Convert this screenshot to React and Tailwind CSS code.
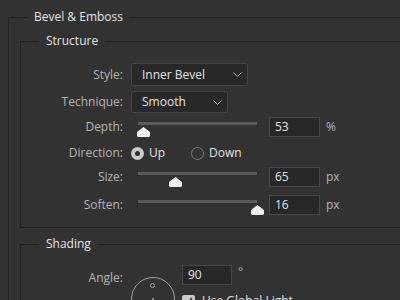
import React from "react";

const Label = ({ children, className = "" }) => (
  <div className={`w-[102px] shrink-0 pr-0 text-right text-[#b4b4b4] ${className}`}>{children}</div>
);

const Chevron = () => (
  <svg width="9" height="5" viewBox="0 0 9 5" className="shrink-0">
    <path d="M0.5 0.5 L4.5 4.5 L8.5 0.5" fill="none" stroke="#a8a8a8" strokeWidth="1" />
  </svg>
);

const Select = ({ value, width }) => (
  <div
    className={`ml-[8px] flex h-full items-center justify-between rounded-[3px] border border-[#454545] bg-[#282828] pl-[10px] pr-[5px] text-[#e2e2e2] ${width}`}
  >
    <span>{value}</span>
    <Chevron />
  </div>
);

const Thumb = () => (
  <svg width="13" height="10" viewBox="0 0 13 10">
    <path d="M6.5 0 L13 5 L13 8.5 Q13 10 11.5 10 L1.5 10 Q0 10 0 8.5 L0 5 Z" fill="#efefef" />
  </svg>
);

const Slider = ({ pos }) => (
  <div className="relative ml-[8px] h-full w-[138px] shrink-0">
    <div className="absolute left-[7px] top-[5px] h-[3px] w-[119px] bg-[#5b5b5b]" />
    <div className="absolute top-[10px]" style={{ left: pos - 6.5 }}>
      <Thumb />
    </div>
  </div>
);

const NumberBox = ({ value, width = "w-[51px]" }) => (
  <div className={`flex h-[20px] items-center border border-[#484848] bg-[#272727] pl-[5px] text-[#e2e2e2] ${width}`}>
    {value}
  </div>
);

const SliderRow = ({ label, pos, value, unit, className }) => (
  <div className={`flex h-[20px] items-center ${className}`}>
    <Label>{label}</Label>
    <Slider pos={pos} />
    <NumberBox value={value} />
    <span className="ml-[6px] text-[#b4b4b4]">{unit}</span>
  </div>
);

export default function App() {
  return (
    <div className="h-[300px] w-[400px] overflow-hidden bg-[#323232] font-['Open_Sans',sans-serif] text-[12px] leading-[16px]">
      <fieldset className="ml-[8px] mt-[9px] w-[430px] border border-[#222222] pl-[11px]">
        <legend className="ml-[8px] px-[6px] text-[#e4e4e4]">Bevel &amp; Emboss</legend>

        {/* Structure */}
        <fieldset className="mt-[8px] border border-[#222222] pb-[12px]">
          <legend className="ml-[18px] px-[7px] text-[#e4e4e4]">Structure</legend>

          <div className="mt-[14px] flex h-[23px] items-center">
            <Label>Style:</Label>
            <Select value="Inner Bevel" width="w-[117px]" />
          </div>

          <div className="mt-[5px] flex h-[22px] items-center">
            <Label>Technique:</Label>
            <Select value="Smooth" width="w-[97px]" />
          </div>

          <SliderRow className="mt-[4px]" label="Depth:" pos={12.5} value="53" unit="%" />

          <div className="mt-[6px] flex h-[20px] items-center">
            <Label>Direction:</Label>
            <div className="ml-[8px] flex w-[60px] items-center">
              <span className="flex h-[13px] w-[13px] items-center justify-center rounded-full bg-[#c9c9c9]">
                <span className="h-[5px] w-[5px] rounded-full bg-[#323232]" />
              </span>
              <span className="ml-[5px] text-[#e2e2e2]">Up</span>
            </div>
            <div className="flex items-center">
              <span className="h-[13px] w-[13px] rounded-full border border-[#7a7a7a]" />
              <span className="ml-[5px] text-[#e2e2e2]">Down</span>
            </div>
          </div>

          <SliderRow className="mt-[4px]" label="Size:" pos={44} value="65" unit="px" />
          <SliderRow className="mt-[8px]" label="Soften:" pos={126} value="16" unit="px" />
        </fieldset>

        {/* Shading */}
        <fieldset className="mt-[8px] h-[80px] border border-[#222222]">
          <legend className="ml-[18px] px-[7px] text-[#e4e4e4]">Shading</legend>

          <div className="mt-[13px] flex items-start">
            <Label className="mt-[3px] leading-[20px]">Angle:</Label>
            <div className="ml-[8px] mt-[12px] relative h-[44px] w-[44px] shrink-0 rounded-full border border-[#a0a0a0]">
              <span className="absolute left-[18px] top-[5px] h-[5px] w-[5px] rounded-full border border-[#a0a0a0]" />
              <span className="absolute left-[20px] top-[20px] h-[2px] w-[2px] rounded-full bg-[#a0a0a0]" />
            </div>
            <div className="ml-[7px] flex flex-col">
              <div className="flex items-start">
                <NumberBox value="90" width="w-[50px]" />
                <span className="ml-[6px] -mt-[1px] text-[#b4b4b4]">°</span>
              </div>
              <div className="mt-[8px] flex items-center">
                <span className="flex h-[13px] w-[13px] items-center justify-center rounded-[2px] bg-[#c9c9c9]">
                  <svg width="9" height="8" viewBox="0 0 9 8">
                    <path d="M1 4 L3.5 6.5 L8 1" fill="none" stroke="#2e2e2e" strokeWidth="1.6" />
                  </svg>
                </span>
                <span className="ml-[7px] text-[#e2e2e2]">Use Global Light</span>
              </div>
            </div>
          </div>
        </fieldset>
      </fieldset>
    </div>
  );
}
